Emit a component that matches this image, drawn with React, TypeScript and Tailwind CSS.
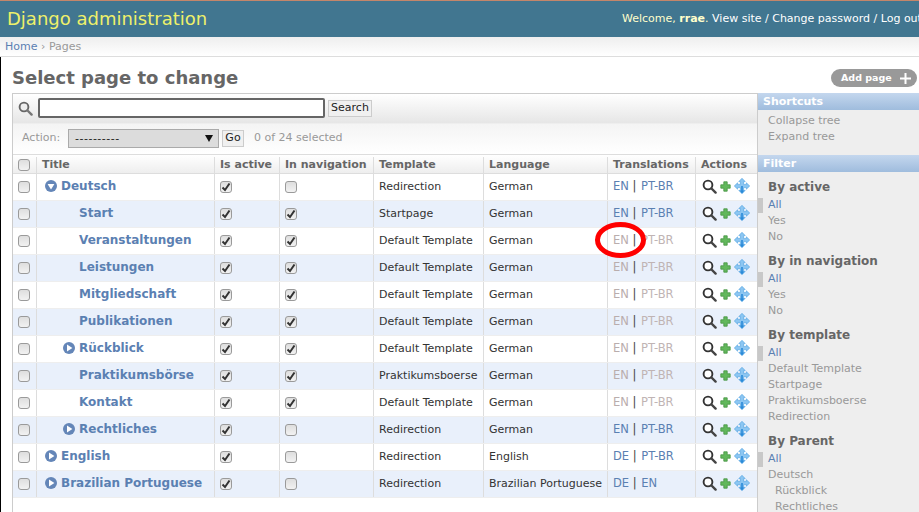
const F = "font-['DejaVu_Sans',sans-serif]";

type Row = { t: string; indent: number; tog?: "down" | "right"; act: boolean; nav: boolean; tpl: string; lang: string; tr: [string, string]; dim: boolean };

const rows: Row[] = [
  { t: "Deutsch", indent: 0, tog: "down", act: true, nav: false, tpl: "Redirection", lang: "German", tr: ["EN", "PT-BR"], dim: false },
  { t: "Start", indent: 1, act: true, nav: true, tpl: "Startpage", lang: "German", tr: ["EN", "PT-BR"], dim: false },
  { t: "Veranstaltungen", indent: 1, act: true, nav: true, tpl: "Default Template", lang: "German", tr: ["EN", "PT-BR"], dim: true },
  { t: "Leistungen", indent: 1, act: true, nav: true, tpl: "Default Template", lang: "German", tr: ["EN", "PT-BR"], dim: true },
  { t: "Mitgliedschaft", indent: 1, act: true, nav: true, tpl: "Default Template", lang: "German", tr: ["EN", "PT-BR"], dim: true },
  { t: "Publikationen", indent: 1, act: true, nav: true, tpl: "Default Template", lang: "German", tr: ["EN", "PT-BR"], dim: true },
  { t: "Rückblick", indent: 1, tog: "right", act: true, nav: true, tpl: "Default Template", lang: "German", tr: ["EN", "PT-BR"], dim: true },
  { t: "Praktikumsbörse", indent: 1, act: true, nav: true, tpl: "Praktikumsboerse", lang: "German", tr: ["EN", "PT-BR"], dim: true },
  { t: "Kontakt", indent: 1, act: true, nav: true, tpl: "Default Template", lang: "German", tr: ["EN", "PT-BR"], dim: true },
  { t: "Rechtliches", indent: 1, tog: "right", act: true, nav: false, tpl: "Redirection", lang: "German", tr: ["EN", "PT-BR"], dim: false },
  { t: "English", indent: 0, tog: "right", act: true, nav: false, tpl: "Redirection", lang: "English", tr: ["DE", "PT-BR"], dim: false },
  { t: "Brazilian Portuguese", indent: 0, tog: "right", act: true, nav: false, tpl: "Redirection", lang: "Brazilian Portuguese", tr: ["DE", "EN"], dim: false },
];

function Check({ on }: { on?: boolean }) {
  return (
    <span className="flex h-[12px] w-[12px] items-center justify-center rounded-[3px] border border-[#9a9a9a] bg-gradient-to-b from-[#dedede] to-[#f2f2f2]">
      {on && (
        <svg width="10" height="10" viewBox="0 0 10 10">
          <path d="M1.5 5.5 L4 8 L8.5 1.5" fill="none" stroke="#333" strokeWidth="2" />
        </svg>
      )}
    </span>
  );
}

function Toggle({ dir }: { dir: "down" | "right" }) {
  return (
    <svg width="12" height="12" viewBox="0 0 12 12" className="shrink-0">
      <circle cx="6" cy="6" r="6" fill="#6486b8" />
      {dir === "down" ? <path d="M2.6 4 H9.4 L6 9.4 Z" fill="#fff" /> : <path d="M4 2.6 V9.4 L9.4 6 Z" fill="#fff" />}
    </svg>
  );
}

function Magnifier({ gray }: { gray?: boolean }) {
  return (
    <svg width="15" height="15" viewBox="0 0 15 15">
      <circle cx="6" cy="6" r="4.4" fill={gray ? "#eee" : "#fff"} stroke={gray ? "#666" : "#333"} strokeWidth="1.9" />
      <path d="M9.5 9.5 L13.6 13.6" stroke={gray ? "#777" : "#444"} strokeWidth="2.4" strokeLinecap="round" />
    </svg>
  );
}

function Plus() {
  return (
    <svg width="11" height="11" viewBox="0 0 11 11">
      <path d="M3.8 .8 H7.2 V3.8 H10.2 V7.2 H7.2 V10.2 H3.8 V7.2 H.8 V3.8 H3.8 Z" fill="#62b85c" stroke="#469442" strokeWidth=".8" />
    </svg>
  );
}

function Move() {
  return (
    <svg width="16" height="16" viewBox="0 0 16 16">
      <path d="M8 .3 L11.2 3.6 H9.6 V6.4 H12.4 V4.8 L15.7 8 L12.4 11.2 V9.6 H9.6 V12.4 H11.2 L8 15.7 L4.8 12.4 H6.4 V9.6 H3.6 V11.2 L.3 8 L3.6 4.8 V6.4 H6.4 V3.6 H4.8 Z" fill="#8cc6f2" stroke="#4a9fe0" strokeWidth=".6" />
      <path d="M8 8 V14.5" stroke="#2a8ad8" strokeWidth="1.6" />
      <path d="M5.5 12.4 H10.5 L8 15.2 Z" fill="#2a8ad8" />
    </svg>
  );
}

function Td({ w, className = "", children }: { w: string; className?: string; children?: React.ReactNode }) {
  return <div className={`${w} flex shrink-0 items-center border-r border-[#ddd] ${className}`}>{children}</div>;
}

function FilterGroup({ title, items }: { title: string; items: string[] }) {
  return (
    <div className="mb-[7px]">
      <div className="h-[19px] pl-[10px] text-[12px] font-bold leading-[19px] text-[#666]">{title}</div>
      {items.map((it, i) => (
        <div key={it} className="relative h-[16px] whitespace-nowrap pl-[10px] text-[11px] leading-[16px]">
          {i === 0 && <span className="absolute left-0 top-[1px] h-[15px] w-[5px] bg-[#c8c8c8]" />}
          <span className={`${it.startsWith(" ") ? "pl-[7px]" : ""} ${i === 0 ? "text-[#5b80b2]" : "text-[#999]"}`}>{it.trim()}</span>
        </div>
      ))}
    </div>
  );
}

export default function App() {
  return (
    <div className={`${F} relative h-[512px] w-[919px] overflow-hidden bg-white text-[11px] text-[#333]`}>
      <header className="flex h-[37px] items-center justify-between overflow-hidden whitespace-nowrap border-t border-[#c4866a] bg-[#417690] pl-[7px]">
        <span className="text-[18px] leading-[32px] text-[#eef06a]">Django administration</span>
        <span className="w-[297px] shrink-0 text-[11px] text-[#ffc]">
          Welcome, <b>rrae</b>. <span className="text-white">View site / Change password / Log out</span>
        </span>
      </header>
      <div className="flex h-[20px] items-center border-b border-[#ddd] bg-gradient-to-b from-[#eee] to-white pl-[5px] pt-[2px] text-[11px] text-[#999]">
        <span className="text-[#5b80b2]">Home</span>&nbsp;›&nbsp;Pages
      </div>
      <div className="h-[455px] border-l border-black">
        <div className="flex h-[36px] items-center justify-between pl-[11px] pr-[2px]">
          <h1 className="mt-[6px] text-[18px] font-bold leading-[24px] text-[#666]">Select page to change</h1>
          <div className="mt-[6px] flex h-[18px] w-[86px] items-center justify-between rounded-[9px] bg-[#999] pl-[10px] pr-[6px] text-[9.5px] font-bold text-white">
            <span>Add page</span>
            <svg width="11" height="11" viewBox="0 0 11 11"><path d="M5.5 0 V11 M0 5.5 H11" stroke="#fff" strokeWidth="2" /></svg>
          </div>
        </div>
        <div className="ml-[11px] flex h-[419px]">
          <main className="w-[745px] shrink-0 border-l border-t border-[#ccc]">
            <div className="flex h-[30px] items-center gap-[2px] border-b border-[#eee] bg-gradient-to-b from-white to-[#e6e6e6] pl-[4px]">
              <span className="mr-[2px] flex w-[17px] justify-center"><Magnifier gray /></span>
              <span className="-mt-[2px] h-[20px] w-[287px] rounded-[2px] border-2 border-[#666] bg-white" />
              <span className="ml-[1px] flex h-[17px] w-[44px] items-center justify-center border border-[#ccc] bg-[#f0f0f0] text-[11px] text-[#222]">Search</span>
            </div>
            <div className="flex h-[30px] items-center bg-gradient-to-b from-[#f4f4f4] to-white pb-[1px] pl-[9px] text-[11px] text-[#999]">
              <span className="w-[46px]">Action:</span>
              <span className="flex h-[19px] w-[151px] items-center justify-between border border-[#aaa] bg-[#dcdcdc] pl-[6px] pr-[5px] text-[#222]">
                <span className="mt-[1px] tracking-[0.5px]">----------</span>
                <svg width="8" height="7" viewBox="0 0 8 7"><path d="M0 0 H8 L4 7 Z" fill="#111" /></svg>
              </span>
              <span className="ml-[3px] flex h-[17px] w-[22px] items-center justify-center border border-[#ccc] bg-[#f0f0f0] text-[#222]">Go</span>
              <span className="ml-[10px]">0 of 24 selected</span>
            </div>
            <div className="flex h-[20px] border-y border-[#ddd] bg-gradient-to-b from-white to-[#eee] pt-[2px] text-[11px] font-bold text-[#666]">
              <Td w="w-[24px]" className="pl-[5px]"><Check /></Td>
              <Td w="w-[178px]" className="pl-[5px]">Title</Td>
              <Td w="w-[65px]" className="pl-[5px]">Is active</Td>
              <Td w="w-[94px]" className="pl-[5px]">In navigation</Td>
              <Td w="w-[110px]" className="pl-[5px]">Template</Td>
              <Td w="w-[124px]" className="pl-[5px]">Language</Td>
              <Td w="w-[88px]" className="pl-[5px]">Translations</Td>
              <div className="pl-[5px] leading-[16px]">Actions</div>
            </div>
            {rows.map((r, i) => (
              <div key={r.t} className={`flex h-[27px] border-b border-[#eee] ${i % 2 ? "bg-[#e9f0fb]" : "bg-white"}`}>
                <Td w="w-[24px]" className="pl-[5px]"><Check /></Td>
                <Td w="w-[178px]" className={`pb-[2px] text-[12px] font-bold text-[#5b80b2] ${r.indent ? "pl-[42px]" : "pl-[8px]"}`}>
                  {r.tog && <span className={r.indent ? "-ml-[16px] mr-[4px]" : "mr-[4px]"}><Toggle dir={r.tog} /></span>}
                  <span className="whitespace-nowrap">{r.t}</span>
                </Td>
                <Td w="w-[65px]" className="pl-[5px]"><Check on={r.act} /></Td>
                <Td w="w-[94px]" className="pl-[5px]"><Check on={r.nav} /></Td>
                <Td w="w-[110px]" className="whitespace-nowrap pl-[5px] text-[#333]">{r.tpl}</Td>
                <Td w="w-[124px]" className="whitespace-nowrap pl-[5px] text-[#333]">{r.lang}</Td>
                <Td w="w-[88px]" className="whitespace-pre pl-[5px] text-[11.5px]">
                  <span className={r.dim ? "text-[#b9adad]" : "text-[#5b80b2]"}>{r.tr[0]}</span>
                  <span className="text-[#444]"> | </span>
                  <span className={`ml-[1px] ${r.dim ? "text-[#c0b4b4]" : "text-[#5b80b2]"}`}>{r.tr[1]}</span>
                </Td>
                <div className="flex items-center gap-[3px] pb-[2px] pl-[6px]">
                  <Magnifier />
                  <Plus />
                  <Move />
                </div>
              </div>
            ))}
          </main>
          <aside className="w-[162px] shrink-0 border-l border-[#ccc] bg-[#eee]">
            <div className="h-[17px] bg-gradient-to-b from-[#c4d7ee] to-[#9fbcdd] pl-[5px] text-[11px] font-bold leading-[17px] text-white">Shortcuts</div>
            <div className="h-[45px] pl-[10px] pt-[3px] text-[11px] leading-[16px] text-[#999]">
              <div>Collapse tree</div>
              <div>Expand tree</div>
            </div>
            <div className="h-[17px] bg-gradient-to-b from-[#c4d7ee] to-[#9fbcdd] pl-[5px] text-[11px] font-bold leading-[17px] text-white">Filter</div>
            <div className="pt-[6px]">
              <FilterGroup title="By active" items={["All", "Yes", "No"]} />
              <FilterGroup title="By in navigation" items={["All", "Yes", "No"]} />
              <FilterGroup title="By template" items={["All", "Default Template", "Startpage", "Praktikumsboerse", "Redirection"]} />
              <FilterGroup title="By Parent" items={["All", "Deutsch", " Rückblick", " Rechtliches"]} />
            </div>
          </aside>
        </div>
      </div>
      <svg className="pointer-events-none absolute left-[593px] top-[221px]" width="56" height="38" viewBox="0 0 56 38">
        <ellipse cx="27.5" cy="19" rx="23" ry="15.5" fill="none" stroke="#f00" strokeWidth="5" />
      </svg>
    </div>
  );
}
